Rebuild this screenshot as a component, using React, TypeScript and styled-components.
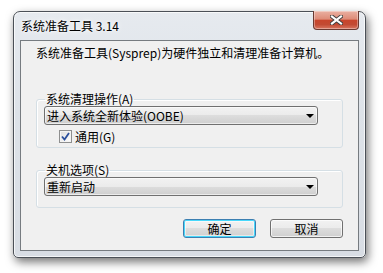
import React from "react";
import styled, { createGlobalStyle, css } from "styled-components";

const GlobalStyle = createGlobalStyle`
  html, body {
    margin: 0;
    padding: 0;
    background: #ffffff;
  }
  body {
    font-family: "Noto Sans CJK SC", "Liberation Sans", sans-serif;
    font-size: 12px;
    color: #000;
  }
`;

const Page = styled.div`
  width: 383px;
  height: 273px;
  padding: 11px 0 0 13px;
  box-sizing: border-box;
`;

const Window = styled.div`
  width: 353px;
  height: 247px;
  box-sizing: border-box;
  border: 1px solid #4b5057;
  border-radius: 7px 7px 5px 5px;
  background: linear-gradient(#e6eaef, #dde2e8 40%, #d8dde4);
  box-shadow: inset 0 0 0 1px rgba(255, 255, 255, 0.7),
    2px 4px 10px rgba(0, 0, 0, 0.55);
  display: flex;
  flex-direction: column;
  padding: 0 6px 6px 6px;
`;

const TitleBar = styled.div`
  height: 28px;
  display: flex;
  justify-content: space-between;
  align-items: flex-start;
`;

const Title = styled.div`
  padding: 7px 0 0 1px;
  font-size: 12px;
  line-height: 14px;
  color: #000;
  text-shadow: 0 0 6px #fff, 0 0 3px #fff;
`;

const CloseButton = styled.div`
  width: 46px;
  height: 19px;
  box-sizing: border-box;
  margin-top: -1px;
  border: 1px solid #6b3a32;
  border-top: none;
  border-radius: 0 0 4px 4px;
  background: linear-gradient(
    #eab0a2 0%,
    #de8c78 45%,
    #c8452c 52%,
    #c24a33 75%,
    #d97660 100%
  );
  box-shadow: inset 0 0 0 1px rgba(255, 255, 255, 0.35);
  display: flex;
  align-items: center;
  justify-content: center;
`;

const Client = styled.div`
  flex: 1;
  background: #f0f0f0;
  border: 1px solid #767b80;
  padding: 5px 15px 0 15px;
  display: flex;
  flex-direction: column;
`;

const Intro = styled.div`
  line-height: 14px;
  height: 14px;
  white-space: nowrap;
`;

const Group = styled.fieldset<{ $top: number; $bottom: number }>`
  margin: ${(p) => p.$top}px 0 0 0;
  width: 307px;
  box-sizing: border-box;
  border: 1px solid #d5dfe5;
  border-radius: 3px;
  box-shadow: inset 1px 1px 0 #ffffff;
  padding: 0 7px ${(p) => p.$bottom}px 7px;
`;

const Legend = styled.legend`
  padding: 0 1px;
  margin-left: 1px;
  line-height: 14px;
  font-size: 12px;
`;

const Combo = styled.div`
  width: 274px;
  height: 19px;
  box-sizing: border-box;
  border: 1px solid #707070;
  border-radius: 3px;
  background: linear-gradient(#f2f2f2 0%, #ebebeb 50%, #dddddd 50%, #cfcfcf 100%);
  box-shadow: inset 0 0 0 1px rgba(255, 255, 255, 0.6);
  display: flex;
  align-items: center;
  justify-content: space-between;
  padding: 0 3px 0 2px;
  line-height: 14px;
`;

const Arrow = styled.span`
  width: 0;
  height: 0;
  border-left: 4px solid transparent;
  border-right: 4px solid transparent;
  border-top: 4px solid #000;
  margin-top: 1px;
`;

const CheckRow = styled.label`
  display: flex;
  align-items: center;
  gap: 3px;
  height: 15px;
  margin: 4px 0 0 15px;
  line-height: 14px;
`;

const Box = styled.span`
  width: 13px;
  height: 13px;
  box-sizing: border-box;
  border: 1px solid #8e8f8f;
  background: linear-gradient(135deg, #dcdcdc, #ffffff);
  box-shadow: inset 0 0 0 1px #f4f4f4;
  display: flex;
  align-items: center;
  justify-content: center;
`;

const Buttons = styled.div`
  display: flex;
  justify-content: flex-end;
  gap: 14px;
  width: 307px;
  margin-top: 11px;
`;

const Button = styled.div<{ $default?: boolean }>`
  width: 73px;
  height: 19px;
  box-sizing: border-box;
  border: 1px solid #707070;
  border-radius: 3px;
  background: linear-gradient(#f2f2f2 0%, #ebebeb 50%, #dddddd 50%, #cfcfcf 100%);
  box-shadow: inset 0 0 0 1px rgba(255, 255, 255, 0.7);
  display: flex;
  align-items: center;
  justify-content: center;
  line-height: 14px;
  ${(p) =>
    p.$default &&
    css`
      border-color: #3c7fb1;
      box-shadow: inset 0 0 0 1px #48d8fb, inset 0 0 0 2px rgba(255, 255, 255, 0.5);
    `}
`;

const CloseIcon = () => (
  <svg width="13" height="10" viewBox="0 0 13 10">
    <path d="M2 1.5 L11 8.5 M11 1.5 L2 8.5" stroke="#3e3e3e" strokeWidth="4" strokeLinecap="square" />
    <path d="M2 1.5 L11 8.5 M11 1.5 L2 8.5" stroke="#ffffff" strokeWidth="2.2" strokeLinecap="square" />
  </svg>
);

const CheckMark = () => (
  <svg width="9" height="9" viewBox="0 0 9 9">
    <path d="M1 4.5 L3.5 7.5 L8 1" fill="none" stroke="#2a4f9c" strokeWidth="1.8" />
  </svg>
);

const App: React.FC = () => {
  return (
    <>
      <GlobalStyle />
      <Page>
        <Window>
          <TitleBar>
            <Title>系统准备工具 3.14</Title>
            <CloseButton>
              <CloseIcon />
            </CloseButton>
          </TitleBar>
          <Client>
            <Intro>系统准备工具(Sysprep)为硬件独立和清理准备计算机。</Intro>
            <Group $top={32} $bottom={3}>
              <Legend>系统清理操作(A)</Legend>
              <Combo>
                <span>进入系统全新体验(OOBE)</span>
                <Arrow />
              </Combo>
              <CheckRow>
                <Box>
                  <CheckMark />
                </Box>
                <span>通用(G)</span>
              </CheckRow>
            </Group>
            <Group $top={15} $bottom={11}>
              <Legend>关机选项(S)</Legend>
              <Combo>
                <span>重新启动</span>
                <Arrow />
              </Combo>
            </Group>
            <Buttons>
              <Button $default>确定</Button>
              <Button>取消</Button>
            </Buttons>
          </Client>
        </Window>
      </Page>
    </>
  );
};

export default App;
